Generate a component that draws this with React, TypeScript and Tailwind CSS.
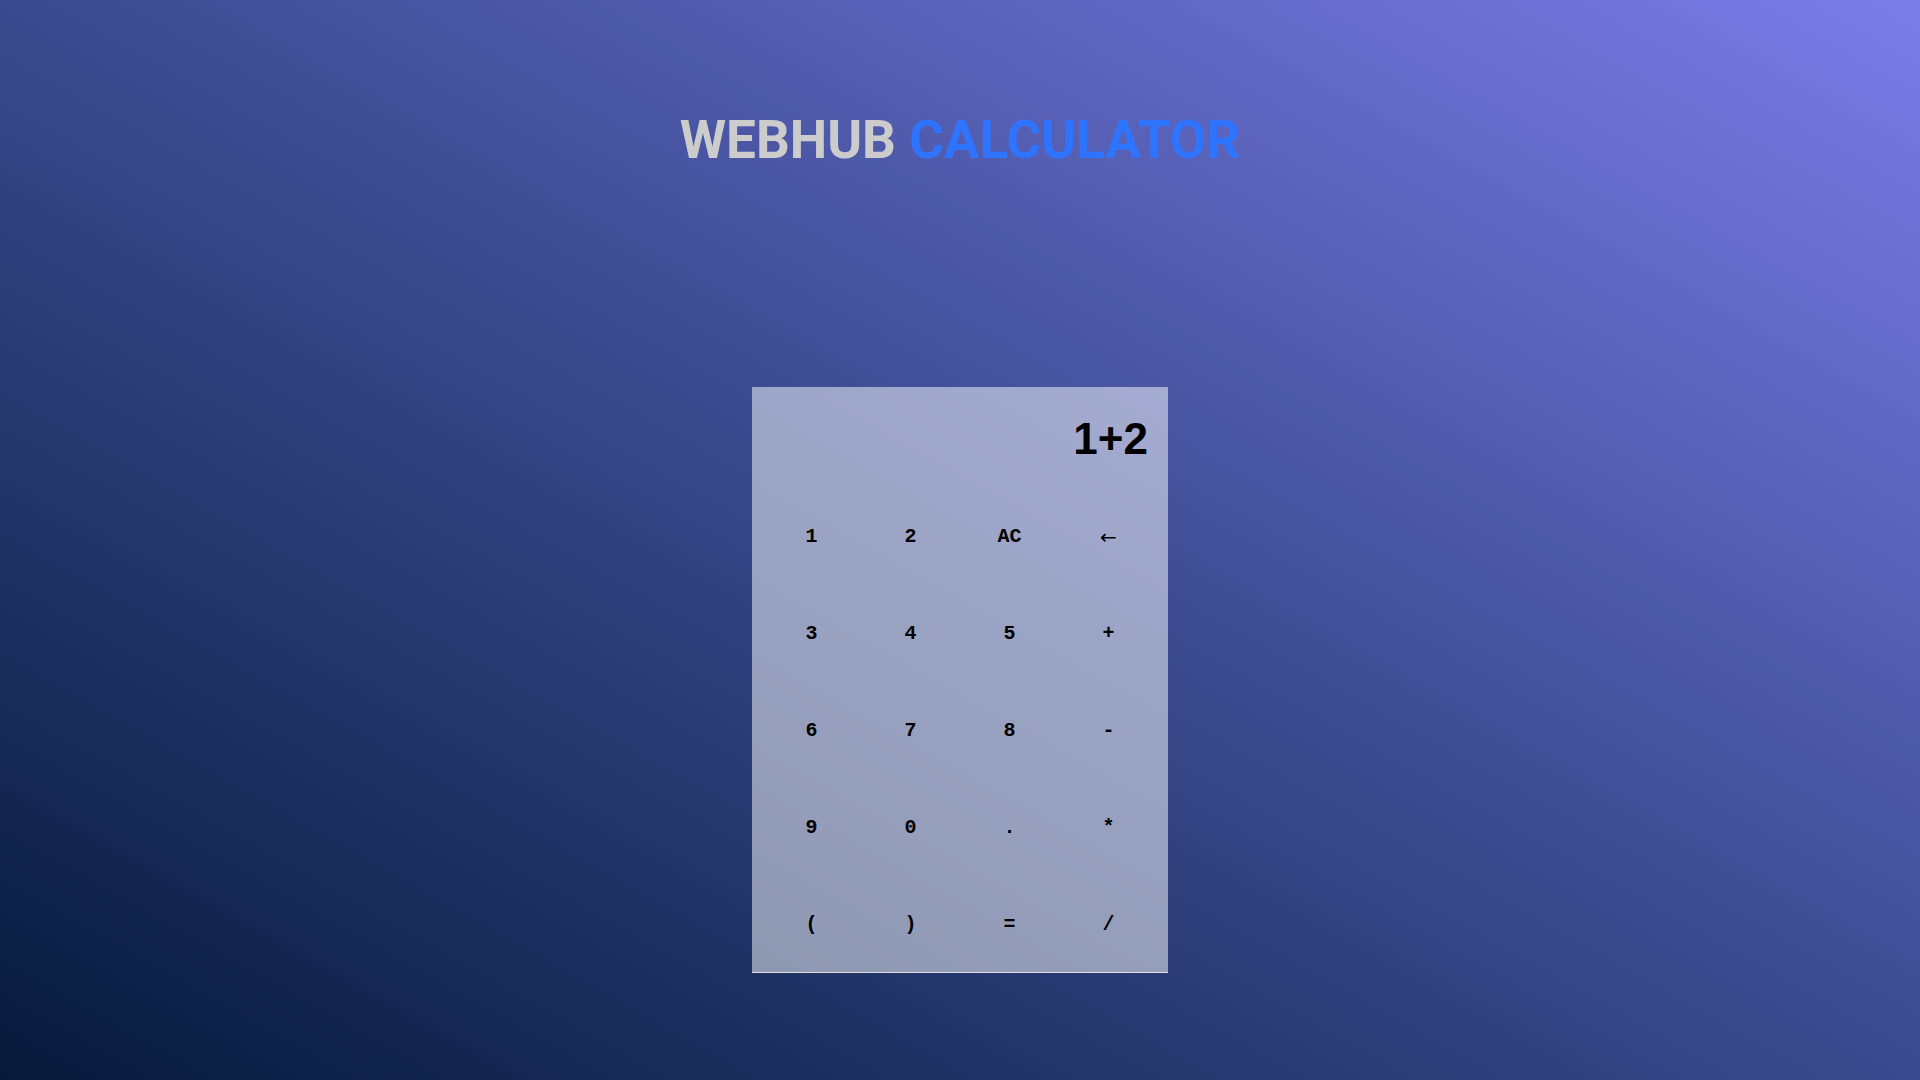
import React, { useState } from 'react';

const keys = ['1', '2', 'AC', '←', '3', '4', '5', '+', '6', '7', '8', '-', '9', '0', '.', '*', '(', ')', '=', '/'];

export default function App() {
  const [expr, setExpr] = useState('1+2');

  const press = (k: string) => {
    if (k === 'AC') return setExpr('');
    if (k === '←') return setExpr((e) => e.slice(0, -1));
    if (k === '=') {
      try {
        // eslint-disable-next-line no-new-func
        setExpr(String(Function(`return (${expr})`)()));
      } catch {
        setExpr('Error');
      }
      return;
    }
    setExpr((e) => e + k);
  };

  return (
    <div className="min-h-screen w-full bg-[linear-gradient(to_top_right,#06193a,#3a4a8e_50%,#7b7ce8)]">
      {/* TITLE */}
      <div className="flex justify-center pt-[114px]">
        <h1 className="font-['Roboto',sans-serif] text-[53px] font-bold leading-none">
          <span className="text-[#cccccc]">WEBHUB</span> <span className="text-[#2f74ff]">CALCULATOR</span>
        </h1>
      </div>

      {/* CALCULATOR */}
      <div className="mt-[220px] flex justify-center">
        <div className="h-[586px] w-[416px] border-b border-white/70 bg-white/50">
          <div className="h-[101px] pr-[20px] pt-[30px] text-right font-['Liberation_Sans',Arial,sans-serif] text-[44px] font-bold leading-none text-black">
            {expr}
          </div>
          <div className="grid grid-cols-4 px-[10px]">
            {keys.map((k) => (
              <button
                key={k}
                type="button"
                onClick={() => press(k)}
                className="flex h-[97px] items-center justify-center bg-transparent font-['Liberation_Mono','Courier_New',monospace] text-[20px] font-bold text-black"
              >
                {k === '←' ? <span className="font-['DejaVu_Sans',sans-serif] font-normal">←</span> : k}
              </button>
            ))}
          </div>
        </div>
      </div>
    </div>
  );
}
